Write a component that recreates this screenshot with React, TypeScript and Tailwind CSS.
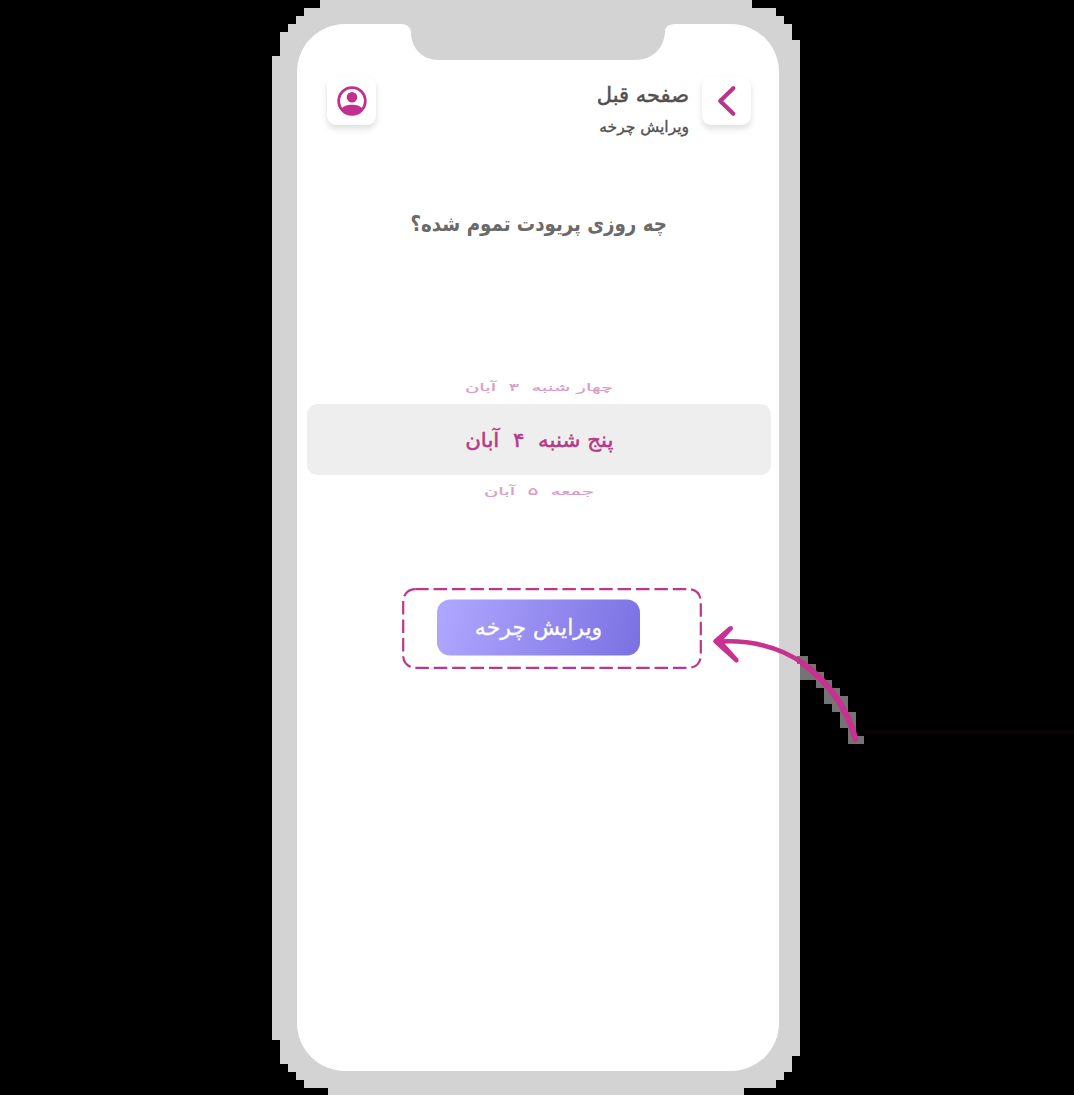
import type { ReactNode } from "react";

function Label({ className, children }: { className: string; children: ReactNode }) {
  return <span className={`block whitespace-pre ${className}`}>{children}</span>;
}

function Notch() {
  return (
    <svg className="absolute left-[102px] top-0" width="280" height="37" viewBox="0 0 280 37" fill="#d3d3d3">
      <path d="M0 0H280C271 0 266 1 266 8C265 24 254 36 236 36H40C23 36 12 24 12 8C11 1 6 0 0 0Z" />
    </svg>
  );
}

function Tile({ children }: { children: ReactNode }) {
  return (
    <div className="flex h-[49px] w-[49px] items-center justify-center rounded-[9px] bg-white shadow-[0_4px_6px_rgba(0,0,0,0.13)]">
      {children}
    </div>
  );
}

function Header() {
  return (
    <header className="flex items-start pr-7 pl-[30px] pt-[52px]">
      <Tile>
        <svg width="30" height="30" viewBox="0 0 30 30">
          <clipPath id="avatar"><circle cx="15" cy="15" r="14" /></clipPath>
          <circle cx="15" cy="15" r="13.3" fill="none" stroke="#c2308f" strokeWidth="2.8" />
          <circle cx="15" cy="11.2" r="5.3" fill="#c2308f" />
          <path clipPath="url(#avatar)" d="M4 23C8 17.3 22 17.3 26 23V30H4Z" fill="#c2308f" />
        </svg>
      </Tile>
      <div className="mr-[13px] ml-auto flex flex-col items-start pt-[3px] text-[#505050]" dir="rtl">
        <Label className="text-[21px] leading-[32px] [-webkit-text-stroke:0.5px]">صفحه قبل</Label>
        <Label className="text-[15.5px] leading-[32px] [-webkit-text-stroke:0.35px]">ویرایش چرخه</Label>
      </div>
      <Tile>
        <svg width="20" height="32" viewBox="0 0 20 32" fill="none">
          <path d="M16.3 3.3L3.2 16L16.3 28.7" stroke="#b93589" strokeWidth="4.2" strokeLinecap="round" strokeLinejoin="round" />
        </svg>
      </Tile>
    </header>
  );
}

function Pointer() {
  return (
    <svg className="absolute left-[700px] top-[610px]" width="374" height="150" viewBox="700 610 374 150" fill="none">
      <path d="M797 656H808V664H816V672H824V680H832V688H840V696H848V712H856V736H864V744H848V728H840V712H832V704H824V688H816V680H800V664H797Z" fill="#747474" />
      <path d="M864 732H1074" stroke="#0a0203" strokeWidth="4" />
      <path d="M720 641.5C752 640 780 647 804 664" stroke="#c8318f" strokeWidth="4.6" strokeLinecap="round" />
      <path d="M803 663.5C829 683 847 708 855.5 739" stroke="#c8318f" strokeWidth="6" strokeLinecap="round" />
      <path d="M713.5 640L729 626.5Q733 624.5 733 629L724 639L725 644L738.5 659Q739 664 735 662L714 643Q712.5 641.5 713.5 640Z" fill="#c8318f" />
    </svg>
  );
}

export default function App() {
  return (
    <main className="relative h-[1095px] w-[1074px] overflow-hidden bg-black font-['DejaVu_Sans',sans-serif]">
      <div className="h-full bg-[#d3d3d3] pl-[297px] pt-6 [clip-path:polygon(320px_0,752px_0,752px_8px,776px_8px,776px_16px,784px_16px,784px_24px,792px_24px,792px_40px,800px_40px,800px_1056px,792px_1056px,792px_1072px,784px_1072px,784px_1080px,776px_1080px,776px_1088px,744px_1088px,744px_1095px,328px_1095px,328px_1088px,304px_1088px,304px_1080px,296px_1080px,296px_1072px,288px_1072px,288px_1064px,280px_1064px,280px_1040px,272px_1040px,272px_56px,280px_56px,280px_32px,288px_32px,288px_24px,296px_24px,296px_16px,304px_16px,304px_8px,320px_8px)]">
        <section className="relative h-[1047px] w-[482px] rounded-[48px] bg-white">
          <Notch />
          <Header />
          <h1 className="mt-[61px] flex justify-center pl-px text-[#6a6a6a]" dir="rtl">
            <Label className="scale-x-[0.868] text-[21px] leading-[40px] font-bold">چه روزی پریودت تموم شده؟</Label>
          </h1>
          <div className="mt-[135px] ml-[2px] flex flex-col items-center text-[#b43b86]" dir="rtl">
            <div className="flex h-[25px] -translate-y-[4px] items-center">
              <Label className="scale-y-[0.55] text-[19.6px] leading-[24px] opacity-50 [-webkit-text-stroke:0.4px]">{"چهار شنبه  ۳  آبان"}</Label>
            </div>
            <div className="flex h-[71px] w-[464px] items-center justify-center rounded-[10px] bg-[#eeeeee]">
              <Label className="scale-x-[1.07] text-[20px] [-webkit-text-stroke:0.5px]">{"پنج شنبه  ۴  آبان"}</Label>
            </div>
            <div className="flex h-[34px] items-center">
              <Label className="scale-y-[0.55] text-[19.6px] leading-[24px] opacity-50 [-webkit-text-stroke:0.4px]">{"جمعه  ۵  آبان"}</Label>
            </div>
          </div>
          <div className="relative mt-[79px] ml-[105px] flex h-[81px] w-[300px] items-center pl-[35px]">
            <svg className="absolute inset-0" width="300" height="81" viewBox="0 0 300 81" fill="none">
              <rect x="1.2" y="1.2" width="297.6" height="78.6" rx="12" stroke="#bb378a" strokeWidth="2.2" strokeDasharray="13.5 4.9" />
            </svg>
            <button className="relative flex h-[56px] w-[203px] -translate-y-[1.5px] items-center justify-center rounded-[13px] bg-[linear-gradient(105deg,#b0a8ff,#7b70e2)] text-white" dir="rtl">
              <Label className="text-[22px] [-webkit-text-stroke:0.3px]">ویرایش چرخه</Label>
            </button>
          </div>
        </section>
      </div>
      <Pointer />
    </main>
  );
}
